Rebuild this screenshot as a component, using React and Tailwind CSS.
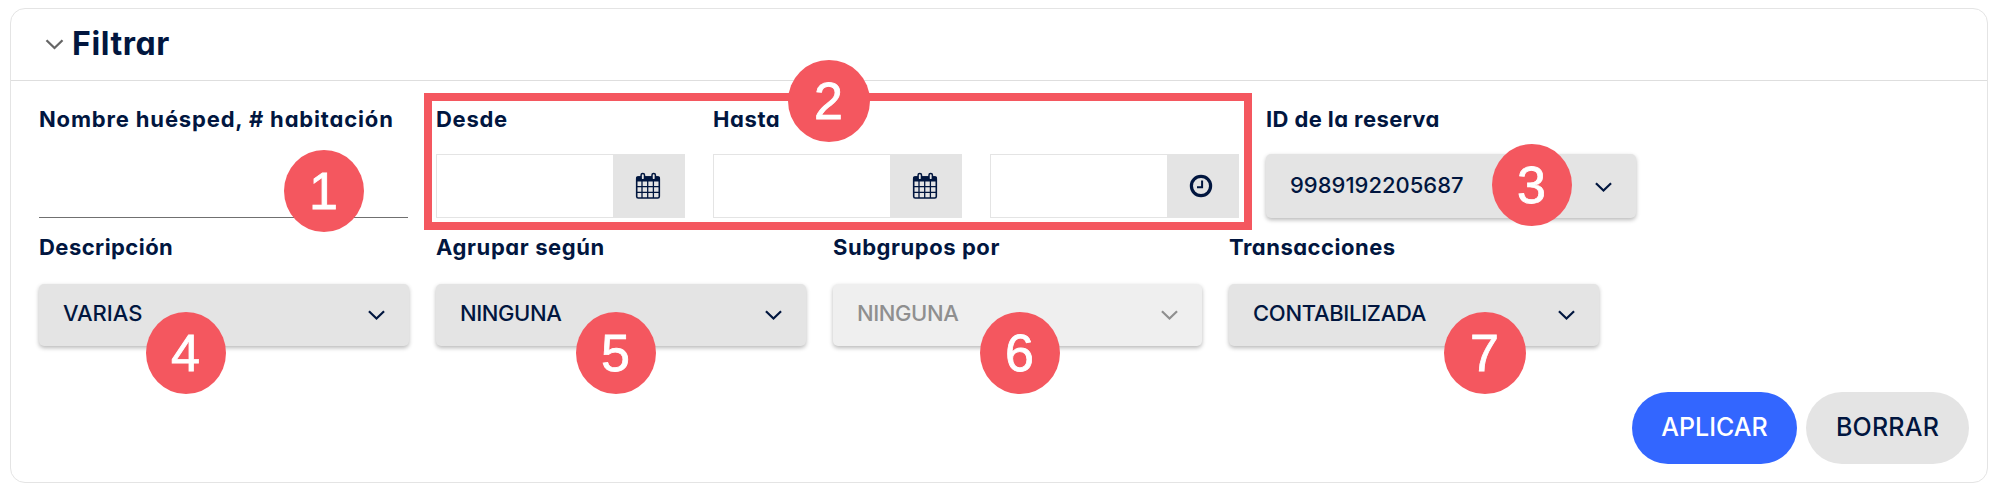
function Chevron({ className = "" }) {
  return (
    <svg viewBox="0 0 18 11" className={`shrink-0 ${className}`} fill="none" stroke="currentColor" strokeWidth="2.3">
      <path d="M1 1.2 L9 9 L17 1.2" />
    </svg>
  );
}

function CalendarIcon() {
  return (
    <svg viewBox="0 0 26 28" className="h-[28px] w-[26px]" fill="none" stroke="currentColor">
      <rect x="1.7" y="5" width="22.6" height="21" rx="1.6" strokeWidth="1.6" />
      <path d="M1 9.6 V6 Q1 4.2 3 4.2 H23 Q25 4.2 25 6 V9.6 Z" fill="currentColor" stroke="none" />
      <path d="M7 9 V26 M12.7 9 V26 M18.4 9 V26 M2 14.7 H24 M2 20.3 H24" strokeWidth="1.3" />
      <rect x="6.1" y="1.4" width="3.4" height="6.4" rx="1.6" fill="#e4e4e4" strokeWidth="1.5" />
      <rect x="17" y="1.4" width="3.4" height="6.4" rx="1.6" fill="#e4e4e4" strokeWidth="1.5" />
    </svg>
  );
}

function ClockIcon() {
  return (
    <svg viewBox="0 0 24 24" className="h-[24px] w-[24px]" fill="none" stroke="currentColor">
      <circle cx="12" cy="12" r="9.6" strokeWidth="3.2" />
      <path d="M13.1 6.5 V13.3 H8" strokeWidth="2" />
    </svg>
  );
}

function Label({ children, className = "" }) {
  return <div className={`h-6 whitespace-nowrap text-[22px] leading-6 font-[650] ${className}`}>{children}</div>;
}

function PickerField({ icon, iconClass = "pr-[2px]" }) {
  return (
    <div className="flex h-16 w-[249px]">
      <div className="grow border border-r-0 border-[#e4e4e4] bg-white" />
      <div className={`flex w-[72px] items-center justify-center bg-[#e4e4e4] ${iconClass}`}>{icon}</div>
    </div>
  );
}

function Select({ value, disabled, className = "", textClass = "" }) {
  return (
    <div
      className={`flex items-start justify-between rounded-[5px] pr-[24px] pl-[24px] shadow-[0_2px_4px_rgba(0,0,0,0.28)] ${
        disabled ? "bg-[#efefef] text-[#8f8f8f]" : "bg-[#e4e4e4]"
      } ${className}`}
    >
      <span className={`text-[22px] leading-6 font-medium whitespace-nowrap ${textClass}`}>{value}</span>
      <Chevron className="mt-[9px] h-[10.5px] w-[17px]" />
    </div>
  );
}

function Marker({ n, className }) {
  return (
    <div
      className={`absolute flex h-[82px] items-center justify-center rounded-[50%] bg-[#f4575f] pr-px font-['Liberation_Sans',sans-serif] text-[52px] leading-none text-white [-webkit-text-stroke:0.8px_white] ${className}`}
    >
      <span>{n}</span>
    </div>
  );
}

export default function App() {
  return (
    <div className="relative h-[496px] w-[2000px] bg-white pt-2 pl-[10px] font-[Inter,sans-serif] text-[#01163f] [font-feature-settings:'cv11']">
      <section className="flex h-[475px] w-[1978px] flex-col rounded-[15px] border border-[#e4e4e4] bg-white">
        <header className="flex h-[72px] items-start border-b border-[#dedede] pl-[34px]">
          <Chevron className="mt-[30px] h-[11px] w-[19px] text-[#666]" />
          <h2 className="mt-[15px] ml-[8px] text-[32px] leading-10 font-bold tracking-[0.6px]">Filtrar</h2>
        </header>

        <div className="flex h-[138px] pt-[26px] pl-[28px]">
          <div className="w-[397px]">
            <Label className="tracking-[0.84px]">Nombre huésped, # habitación</Label>
            <div className="mt-[18px] h-[69px] w-[369px] border-b border-[#707070]" />
          </div>
          <div className="w-[277px]">
            <Label className="tracking-[0.7px]">Desde</Label>
            <div className="mt-[23px]"><PickerField icon={<CalendarIcon />} /></div>
          </div>
          <div className="w-[277px]">
            <Label className="tracking-[0.6px]">Hasta</Label>
            <div className="mt-[23px]"><PickerField icon={<CalendarIcon />} /></div>
          </div>
          <div className="w-[276px] pt-[47px]">
            <PickerField icon={<ClockIcon />} iconClass="pr-[4px]" />
          </div>
          <div>
            <Label className="tracking-[0.4px]">ID de la reserva</Label>
            <Select value="9989192205687" className="mt-[23px] h-[64px] w-[370px] pt-[19px]" />
          </div>
        </div>

        <div className="flex gap-[27px] pt-[16px] pl-[28px]">
          <div className="w-[370px]">
            <Label className="tracking-[0.45px]">Descripción</Label>
            <Select value="VARIAS" className="mt-[25px] h-[62px] pt-[17px]" />
          </div>
          <div className="w-[370px]">
            <Label className="tracking-[0.6px]">Agrupar según</Label>
            <Select value="NINGUNA" textClass="tracking-[-0.4px]" className="mt-[25px] h-[62px] pt-[17px]" />
          </div>
          <div className="w-[369px]">
            <Label className="tracking-[0.55px]">Subgrupos por</Label>
            <Select value="NINGUNA" disabled textClass="tracking-[-0.4px]" className="mt-[25px] h-[62px] pt-[17px]" />
          </div>
          <div className="w-[370px]">
            <Label className="tracking-[0.5px]">Transacciones</Label>
            <Select value="CONTABILIZADA" textClass="tracking-[-0.3px]" className="mt-[25px] h-[62px] pt-[17px]" />
          </div>
        </div>

        <div className="mt-auto mr-[18px] mb-[18px] flex justify-end gap-[9px]">
          <button className="h-[72px] w-[165px] rounded-full bg-[#3366ff] text-[25px] font-medium text-white">APLICAR</button>
          <button className="h-[72px] w-[163px] rounded-full bg-[#e4e4e4] text-[25px] font-medium tracking-[0.2px]">BORRAR</button>
        </div>
      </section>

      <div className="absolute top-[93px] left-[424px] h-[137px] w-[828px] border-8 border-[#f4575f]" />
      <Marker n="1" className="top-[150px] left-[284px] w-[80px]" />
      <Marker n="2" className="top-[60px] left-[788px] w-[82px]" />
      <Marker n="3" className="top-[144px] left-[1492px] w-[80px]" />
      <Marker n="4" className="top-[312px] left-[146px] w-[80px]" />
      <Marker n="5" className="top-[312px] left-[576px] w-[80px]" />
      <Marker n="6" className="top-[312px] left-[980px] w-[80px]" />
      <Marker n="7" className="top-[312px] left-[1444px] w-[82px]" />
    </div>
  );
}
